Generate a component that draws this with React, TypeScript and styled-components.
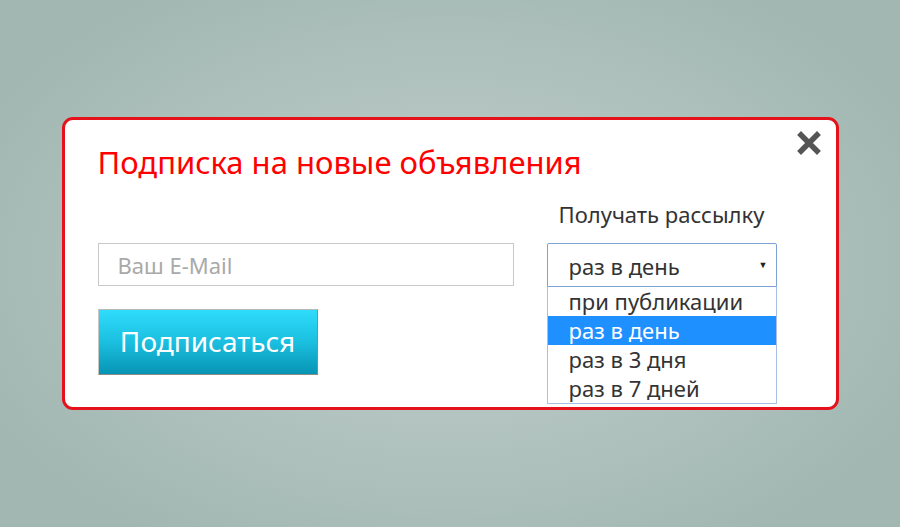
import React from "react";
import styled, { createGlobalStyle } from "styled-components";

const Global = createGlobalStyle`
  html, body { margin: 0; padding: 0; }
  body {
    font-family: "Noto Sans", "Open Sans", sans-serif;
    background: radial-gradient(ellipse 520px 330px at 450px 265px, #c6d3cf 0%, #b4c5c1 45%, #a2b7b2 100%);
    background-color: #a2b7b2;
  }
`;

const Page = styled.div`
  width: 900px;
  height: 527px;
  display: flex;
  align-items: center;
  justify-content: center;
`;

const Modal = styled.div`
  position: relative;
  box-sizing: border-box;
  width: 777px;
  height: 293px;
  background: #fff;
  border: 3px solid #e5121b;
  border-radius: 11px;
  padding: 22px 59px 0 33px;
  display: grid;
  grid-template-columns: 416px 230px;
  column-gap: 33px;
  grid-template-rows: auto auto auto auto;
  align-content: start;
`;

const Close = styled.button`
  position: absolute;
  top: 8px;
  right: 12px;
  width: 30px;
  height: 30px;
  padding: 0;
  border: 0;
  background: transparent;
  display: flex;
  align-items: center;
  justify-content: center;
  cursor: pointer;
`;

const Title = styled.h2`
  grid-column: 1 / span 2;
  margin: 0;
  font-weight: normal;
  font-size: 31px;
  line-height: 40px;
  color: #ff0000;
`;

const Label = styled.div`
  grid-column: 2;
  margin-top: 18px;
  font-size: 22px;
  line-height: 28px;
  color: #333;
  text-align: center;
`;

const EmailInput = styled.input`
  grid-column: 1;
  grid-row: 3;
  margin-top: 15px;
  box-sizing: border-box;
  width: 416px;
  height: 43px;
  border: 1px solid #c8c8c8;
  padding: 0 19px;
  font-family: inherit;
  font-size: 22px;
  color: #333;
  outline: none;
  &::placeholder { color: #a9a9a9; }
`;

const SelectWrap = styled.div`
  grid-column: 2;
  grid-row: 3;
  margin-top: 15px;
  position: relative;
`;

const SelectBox = styled.div`
  box-sizing: border-box;
  height: 44px;
  border: 1px solid #7da2d6;
  border-radius: 2px 2px 0 0;
  display: flex;
  align-items: center;
  justify-content: space-between;
  padding: 2px 8px 0 21px;
  font-size: 22px;
  color: #333;
`;

const Arrow = styled.span`
  font-size: 9px;
  color: #222;
  margin-top: -4px;
`;

const List = styled.ul`
  position: absolute;
  left: 0;
  right: 0;
  top: 44px;
  margin: 0;
  padding: 0;
  list-style: none;
  box-sizing: border-box;
  border: 1px solid #a8c0e6;
  border-top: 0;
  background: #fff;
`;

const Item = styled.li<{ $active?: boolean }>`
  height: 29px;
  line-height: 28px;
  padding-left: 21px;
  font-size: 22px;
  color: ${(p) => (p.$active ? "#fff" : "#333")};
  background: ${(p) => (p.$active ? "#1e90ff" : "transparent")};
`;

const Submit = styled.button`
  grid-column: 1;
  grid-row: 4;
  justify-self: start;
  margin-top: 22px;
  box-sizing: border-box;
  width: 220px;
  height: 66px;
  border: 1px solid #8a8a8a;
  border-top-color: #b8b8b8;
  border-left-color: #c6c6c6;
  background: linear-gradient(to bottom, #2fdcfb 0%, #1bbfe0 50%, #0794b4 100%);
  color: #fff;
  font-family: inherit;
  font-size: 28px;
  padding: 0 0 2px;
  cursor: pointer;
`;

const options = ["при публикации", "раз в день", "раз в 3 дня", "раз в 7 дней"];

export default function App() {
  return (
    <>
      <Global />
      <Page>
        <Modal>
          <Close aria-label="Закрыть">
            <svg width="24" height="24" viewBox="0 0 24 24">
              <path d="M4 4 L20 20 M20 4 L4 20" stroke="#555" strokeWidth="5.5" strokeLinecap="square" />
            </svg>
          </Close>
          <Title>Подписка на новые объявления</Title>
          <Label>Получать рассылку</Label>
          <EmailInput placeholder="Ваш E-Mail" />
          <SelectWrap>
            <SelectBox>
              <span>раз в день</span>
              <Arrow>▼</Arrow>
            </SelectBox>
            <List>
              {options.map((o) => (
                <Item key={o} $active={o === "раз в день"}>{o}</Item>
              ))}
            </List>
          </SelectWrap>
          <Submit>Подписаться</Submit>
        </Modal>
      </Page>
    </>
  );
}
